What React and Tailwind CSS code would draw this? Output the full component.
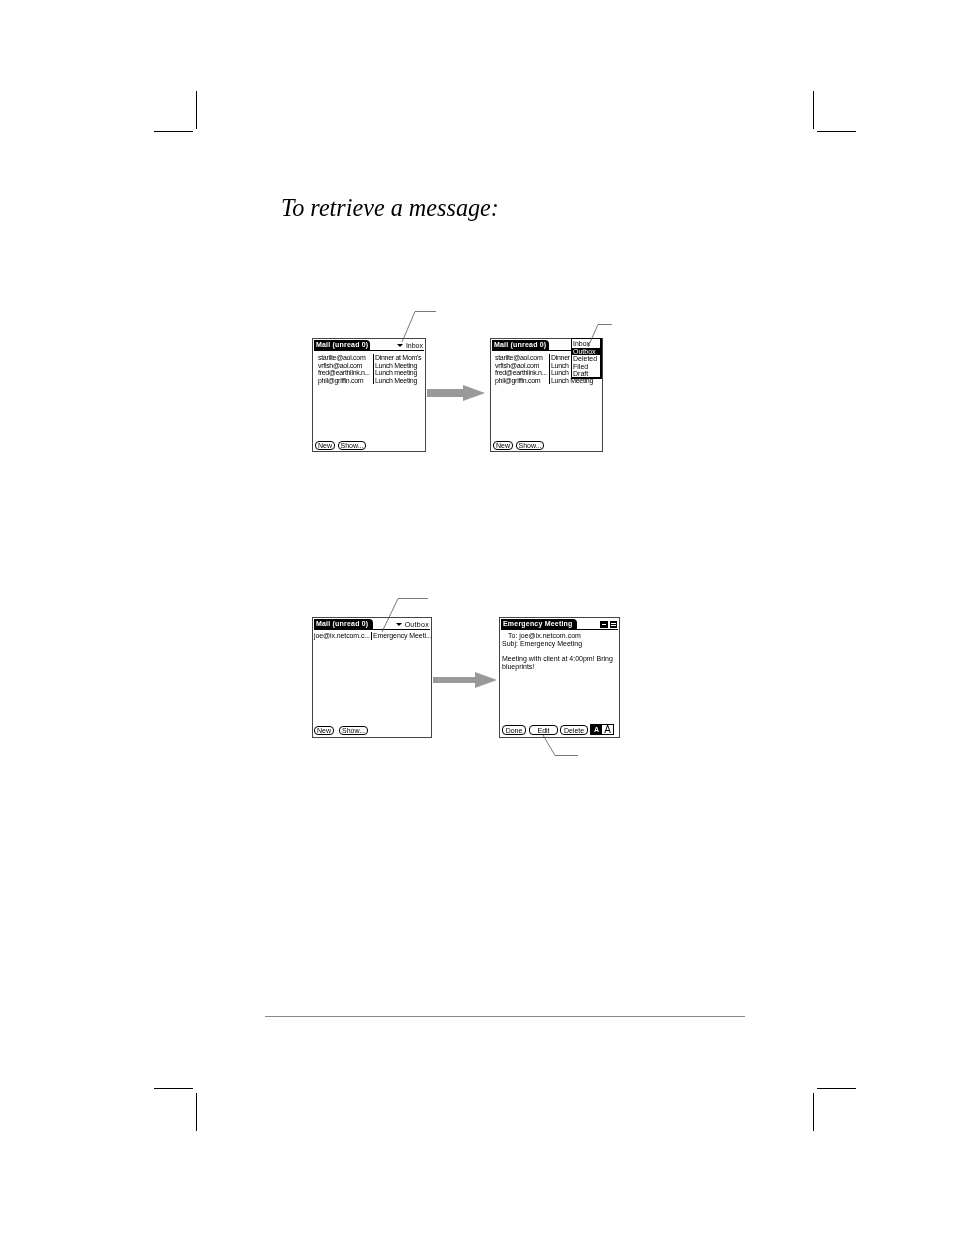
const font = { fontFamily: '"Liberation Sans", Arial, sans-serif' }

function Pill({ children, w, h = 'h-[9px]' }) {
  return (
    <div className={`${w} ${h} rounded-[4px] border border-black flex items-center justify-center text-[7px] leading-none text-black`}>
      {children}
    </div>
  )
}

function Header({ title, titleW, children }) {
  return (
    <div className="flex items-stretch h-[11px] border-b border-black mx-px mt-px">
      <div className={`${titleW} bg-black text-white font-bold text-[7px] leading-[10px] pl-[2px] tracking-[0.2px] rounded-tr-sm whitespace-nowrap`}>
        {title}
      </div>
      <div className="flex-1 flex items-center justify-end gap-[2px] pr-px">{children}</div>
    </div>
  )
}

function Folder({ name, gap }) {
  return (
    <>
      <span className="w-0 h-0 border-x-[3px] border-x-transparent border-t-[3px] border-t-black" />
      <span className={`${gap} text-[7px] leading-none text-black`}>{name}</span>
    </>
  )
}

function MailRows({ rows, leftW, top, track }) {
  return (
    <div className={`${top} ${track} flex text-[7px] leading-[7.6px] text-black whitespace-nowrap`}>
      <div className={`${leftW} shrink-0`}>
        {rows.map((r) => (
          <div key={r[0]}>{r[0]}</div>
        ))}
      </div>
      <div className="border-l border-black pl-px">
        {rows.map((r, i) => (
          <div key={i}>{r[1]}</div>
        ))}
      </div>
    </div>
  )
}

function Screen({ w, h, children }) {
  return (
    <div className={`${w} ${h} relative shrink-0 border border-[#444] bg-white flex flex-col`} style={font}>
      {children}
    </div>
  )
}

function Arrow({ w, h, shaft, className }) {
  const mid = h / 2
  return (
    <svg width={w} height={h} className={`shrink-0 ${className}`}>
      <path
        d={`M0 ${mid - shaft} H${w - 22} V0 L${w} ${mid} L${w - 22} ${h} V${mid + shaft} H0 Z`}
        fill="#999999"
      />
    </svg>
  )
}

export default function App() {
  return (
    <div className="relative w-[954px] h-[1235px] bg-white overflow-hidden grayscale">
      <div className="pt-[194px] pl-[281px]">
        <h1
          className="h-[30px] leading-[28px] text-[24.2px] italic font-normal text-black whitespace-nowrap"
          style={{ fontFamily: '"Liberation Serif", "Times New Roman", serif' }}
        >
          To retrieve a message:
        </h1>
      </div>

      {/* first pair of screens */}
      <div className="flex items-start mt-[114px] ml-[312px]">
        <Screen w="w-[114px]" h="h-[114px]">
          <Header title="Mail (unread 0)" titleW="w-[56px]">
            <Folder name="Inbox" gap="ml-[1px]" />
          </Header>
          <MailRows
            top="mt-[3px] ml-[5px]"
            leftW="w-[55px]"
            track="tracking-[-0.3px]"
            rows={[
              ['starlite@aol.com', "Dinner at Mom's"],
              ['vrfish@aol.com', 'Lunch Meeting'],
              ['fred@earthlink.n...', 'Lunch meeting'],
              ['phil@griffin.com', 'Lunch Meeting'],
            ]}
          />
          <div className="mt-auto mb-px ml-[2px] flex gap-[3px]">
            <Pill w="w-[20px]">New</Pill>
            <Pill w="w-[28px]">Show...</Pill>
          </div>
        </Screen>
        <Arrow w={58} h={16} shaft={4} className="ml-px mt-[47px]" />
        <Screen w="w-[113px] ml-[5px]" h="h-[114px]">
          <Header title="Mail (unread 0)" titleW="w-[57px]" />
          <MailRows
            top="mt-[3px] ml-[4px]"
            leftW="w-[54px]"
            track="tracking-[-0.3px]"
            rows={[
              ['starlite@aol.com', 'Dinner'],
              ['vrfish@aol.com', 'Lunch'],
              ['fred@earthlink.n...', 'Lunch'],
              ['phil@griffin.com', 'Lunch Meeting'],
            ]}
          />
          <div className="mt-auto mb-px ml-[2px] flex gap-[3px]">
            <Pill w="w-[20px]">New</Pill>
            <Pill w="w-[28px]">Show...</Pill>
          </div>
          {/* folder popup */}
          <div className="absolute left-[80px] top-[-1px] w-[31px] h-[41px] bg-white border border-black border-r-2 border-b-2 text-[7px] leading-[7.6px] text-black pt-px">
            <div className="pl-px">Inbox</div>
            <div className="pl-px bg-black text-white">Outbox</div>
            <div className="pl-px">Deleted</div>
            <div className="pl-px">Filed</div>
            <div className="pl-px">Draft</div>
          </div>
        </Screen>
      </div>

      {/* second pair of screens */}
      <div className="flex items-start mt-[165px] ml-[312px]">
        <Screen w="w-[120px]" h="h-[121px]">
          <Header title="Mail (unread 0)" titleW="w-[59px]">
            <Folder name="Outbox" gap="ml-[1px] tracking-[0.3px]" />
          </Header>
          <MailRows
            top="mt-[2px] ml-[1px]"
            leftW="w-[57px]"
            track="tracking-[-0.1px]"
            rows={[['joe@ix.netcom.c...', 'Emergency Meeti...']]}
          />
          <div className="mt-auto mb-[2px] ml-[1px] flex gap-[5px]">
            <Pill w="w-[20px]">New</Pill>
            <Pill w="w-[29px]">Show...</Pill>
          </div>
        </Screen>
        <Arrow w={64} h={16} shaft={3} className="ml-px mt-[55px]" />
        <Screen w="w-[121px] ml-[2px]" h="h-[121px]">
          <Header title="Emergency Meeting" titleW="w-[76px]">
            <span className="w-[8px] h-[7px] border border-black bg-black flex items-center justify-center">
              <span className="w-[4px] h-[1px] bg-white" />
            </span>
            <span className="w-[7px] h-[7px] bg-black flex flex-col justify-center gap-px px-px">
              <span className="h-px bg-white" />
              <span className="h-px bg-white" />
            </span>
          </Header>
          <div className="mt-[2px] ml-[2px] text-[7px] leading-[7.7px] text-black">
            <div className="pl-[6px]">To: joe@ix.netcom.com</div>
            <div>Subj: Emergency Meeting</div>
            <div className="mt-[8px]">Meeting with client at 4:00pm! Bring</div>
            <div>blueprints!</div>
          </div>
          <div className="mt-auto mb-[2px] ml-[2px] flex items-end">
            <Pill w="w-[24px]" h="h-[10px]">Done</Pill>
            <div className="ml-[3px]"><Pill w="w-[29px]" h="h-[10px]">Edit</Pill></div>
            <div className="ml-[2px]"><Pill w="w-[28px]" h="h-[10px]">Delete</Pill></div>
            <div className="ml-[2px] flex h-[11px] border border-black w-[24px]">
              <span className="flex-1 bg-black text-white font-bold text-[7px] leading-[9px] text-center">A</span>
              <span className="flex-1 text-[10px] leading-[9px] text-center text-black">A</span>
            </div>
          </div>
        </Screen>
      </div>

      <div className="mt-[278px] ml-[265px] w-[480px] h-px bg-[#888]" />

      {/* crop marks and leader lines, on top of the page */}
      <svg className="absolute inset-0 pointer-events-none" width="954" height="1235" fill="none" stroke="#000" strokeWidth="1" shapeRendering="crispEdges">
        <path d="M196.5 91V129M154 131.5H193M813.5 91V129M817 131.5H856" />
        <path d="M154 1088.5H193M196.5 1093V1131M817 1088.5H856M813.5 1093V1131" />
      </svg>
      <svg className="absolute inset-0 pointer-events-none" width="954" height="1235" fill="none" stroke="#555" strokeWidth="0.8">
        <path d="M436 311.5H415L402 342" />
        <path d="M612 324.5H598L588 347" />
        <path d="M428 598.5H398L382 632" />
        <path d="M578 755.5H555L543 735" />
      </svg>
    </div>
  )
}
